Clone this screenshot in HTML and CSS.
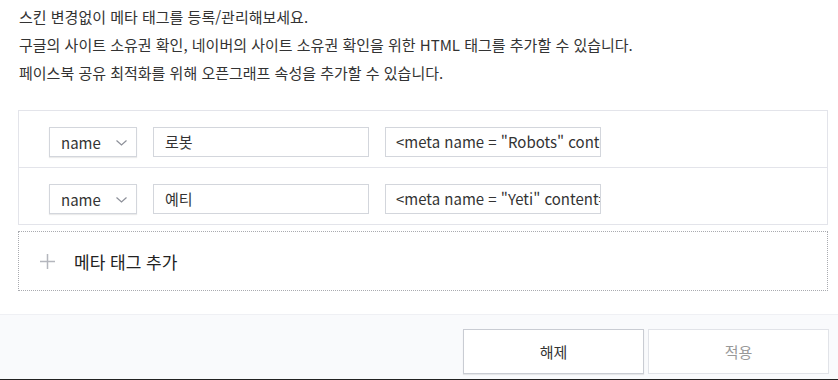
FILE: index.html
```html
<!DOCTYPE html>
<html lang="ko">
<head>
<meta charset="utf-8">
<link rel="stylesheet" href="styles.css">
</head>
<body>
<div class="page">
  <div class="intro">
    <p>스킨 변경없이 메타 태그를 등록/관리해보세요.</p>
    <p>구글의 사이트 소유권 확인, 네이버의 사이트 소유권 확인을 위한 HTML 태그를 추가할 수 있습니다.</p>
    <p>페이스북 공유 최적화를 위해 오픈그래프 속성을 추가할 수 있습니다.</p>
  </div>
  <div class="meta-list">
    <div class="meta-row">
      <div class="select"><span>name</span><svg class="chev" width="11" height="6" viewBox="0 0 11 6"><path d="M0.5 0.5 L5.5 5 L10.5 0.5" fill="none" stroke="#8d9099" stroke-width="1.2"/></svg></div>
      <div class="field">로봇</div>
      <div class="field code">&lt;meta name = "Robots" content="noindex"&gt;</div>
    </div>
    <div class="meta-row">
      <div class="select"><span>name</span><svg class="chev" width="11" height="6" viewBox="0 0 11 6"><path d="M0.5 0.5 L5.5 5 L10.5 0.5" fill="none" stroke="#8d9099" stroke-width="1.2"/></svg></div>
      <div class="field">예티</div>
      <div class="field code">&lt;meta name = "Yeti" content="noindex"&gt;</div>
    </div>
  </div>
  <div class="add-row">
    <svg class="plus" width="15" height="15" viewBox="0 0 15 15"><path d="M7.5 0 V15 M0 7.5 H15" stroke="#b4b6bd" stroke-width="1.5"/></svg>
    <span>메타 태그 추가</span>
  </div>
</div>
<div class="footer">
  <button class="btn">해제</button>
  <button class="btn disabled">적용</button>
</div>
</body>
</html>
```
FILE: styles.css
```css
* { box-sizing: border-box; }
html, body { margin: 0; padding: 0; background: #fff; }
body {
  font-family: "Noto Sans CJK KR", "Noto Sans", sans-serif;
  color: #333;
  font-size: 15px;
  width: 838px;
  height: 380px;
  overflow: hidden;
  display: flex;
  flex-direction: column;
}
.page { padding: 3px 10px 0 18px; height: 314px; }
.intro p { margin: 0; line-height: 28px; padding-left: 1px; font-size: 15px; color: #333; }
.meta-list {
  margin-top: 23px;
  border: 1px solid #e3e4ea;
}
.meta-row {
  display: flex;
  gap: 16px;
  padding: 16px 0 10px 30px;
  height: 57px;
}
.meta-row + .meta-row { border-top: 1px solid #e3e4ea; height: 57px; }
.meta-row:first-child { height: 56px; }
.select {
  width: 88px;
  height: 30px;
  border: 1px solid #d3d6dc;
  box-shadow: 0 1px 1px rgba(0,0,0,0.08);
  display: flex;
  align-items: center;
  justify-content: space-between;
  padding: 0 9px 0 11px;
  font-size: 15px;
  color: #333;
}
.chev { display: block; margin-top: 1px; }
.field {
  width: 216px;
  height: 30px;
  border: 1px solid #d3d6dc;
  padding: 0 11px;
  line-height: 28px;
  white-space: nowrap;
  overflow: hidden;
  color: #333;
  font-size: 15px;
}
.field.code { padding-left: 10px; }
.add-row {
  margin-top: 6px;
  height: 60px;
  border: 1px dotted #a9abb0;
  display: flex;
  align-items: center;
  padding-left: 21px;
  gap: 19px;
  font-size: 17px;
  color: #222;
}
.plus { display: block; }
.footer {
  flex: 1;
  background: #f9fafc;
  border-top: 1px solid #eff0f4;
  border-bottom: 1px solid #222;
  display: flex;
  justify-content: flex-end;
  align-items: flex-start;
  gap: 4px;
  padding: 14px 9px 0 0;
}
.btn {
  width: 181px;
  height: 45px;
  background: #fff;
  border: 1px solid #c9ccd3;
  box-shadow: 0 1px 1px rgba(0,0,0,0.08);
  font-family: "Noto Sans CJK KR", "Noto Sans", sans-serif;
  font-size: 15px;
  color: #333;
  padding: 0;
}
.btn.disabled { border-color: #e1e3e8; box-shadow: none; color: #999; }
```
